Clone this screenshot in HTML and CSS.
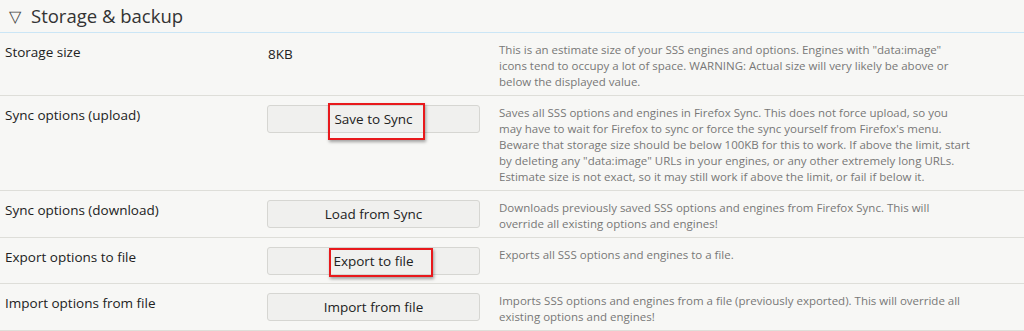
FILE: index.html
```html
<!DOCTYPE html>
<html lang="en">
<head>
    <meta charset="UTF-8">
    <title>Storage &amp; backup</title>
    <link rel="stylesheet" href="styles.css">
</head>
<body>
    <section class="section">
        <h2 class="section-title"><span class="toggle">&#9661;</span>Storage &amp; backup</h2>

        <div class="row">
            <div class="label">Storage size</div>
            <div class="control"><span class="value">8KB</span></div>
            <div class="desc">This is an estimate size of your SSS engines and options. Engines with "data:image" icons tend to occupy a lot of space. WARNING: Actual size will very likely be above or below the displayed value.</div>
        </div>

        <div class="row">
            <div class="label">Sync options (upload)</div>
            <div class="control"><button type="button"><span class="mark mark-save">Save to Sync</span></button></div>
            <div class="desc">Saves all SSS options and engines in Firefox Sync. This does not force upload, so you may have to wait for Firefox to sync or force the sync yourself from Firefox's menu. Beware that storage size should be below 100KB for this to work. If above the limit, start by deleting any "data:image" URLs in your engines, or any other extremely long URLs. Estimate size is not exact, so it may still work if above the limit, or fail if below it.</div>
        </div>

        <div class="row">
            <div class="label">Sync options (download)</div>
            <div class="control"><button type="button">Load from Sync</button></div>
            <div class="desc">Downloads previously saved SSS options and engines from Firefox Sync. This will override all existing options and engines!</div>
        </div>

        <div class="row">
            <div class="label">Export options to file</div>
            <div class="control"><button type="button"><span class="mark mark-export">Export to file</span></button></div>
            <div class="desc">Exports all SSS options and engines to a file.</div>
        </div>

        <div class="row">
            <div class="label">Import options from file</div>
            <div class="control"><button type="button">Import from file</button></div>
            <div class="desc">Imports SSS options and engines from a file (previously exported). This will override all existing options and engines!</div>
        </div>
    </section>
</body>
</html>
```

FILE: styles.css
```css
body {
    margin: 0;
    background: #f7f7f5;
    font-family: 'Open Sans', 'Noto Sans', sans-serif;
    color: #222;
}

.section-title {
    margin: 0;
    padding: 2px 0 0 9px;
    height: 30px;
    font-size: 18.5px;
    font-weight: 400;
    line-height: 28px;
    color: #333;
    border-bottom: 1px solid #cbe6f6;
}

.toggle {
    display: inline-block;
    width: 22px;
    font-size: 16px;
    color: #444;
    vertical-align: 1px;
}

.row {
    display: grid;
    grid-template-columns: 262px 232px 1fr;
    padding: 9px 0 5px 5px;
    border-bottom: 1px solid #deded9;
}

.label {
    font-size: 13.5px;
    line-height: 20px;
}

.value {
    display: inline-block;
    padding: 1px 0 0 1px;
    font-size: 13.5px;
    line-height: 20px;
}

.control button {
    width: 213px;
    height: 28px;
    margin-bottom: 3px;
    padding: 0;
    background: #f0f0ee;
    border: 1px solid #d6d6d2;
    border-radius: 3px;
    font-family: inherit;
    font-size: 13.5px;
    color: #222;
}

.desc {
    max-width: 472px;
    font-size: 11.5px;
    line-height: 16px;
    color: #777;
}

.mark {
    position: relative;
}

.mark::after {
    content: "";
    position: absolute;
    border: 2px solid #e8191c;
    box-shadow: 1px 2px 3px rgba(0, 0, 0, 0.35);
}

.mark-save::after {
    left: -6px;
    right: -12px;
    top: -7px;
    bottom: -12px;
}

.mark-export::after {
    left: -4px;
    right: -19px;
    top: -4px;
    bottom: -7px;
}
```
